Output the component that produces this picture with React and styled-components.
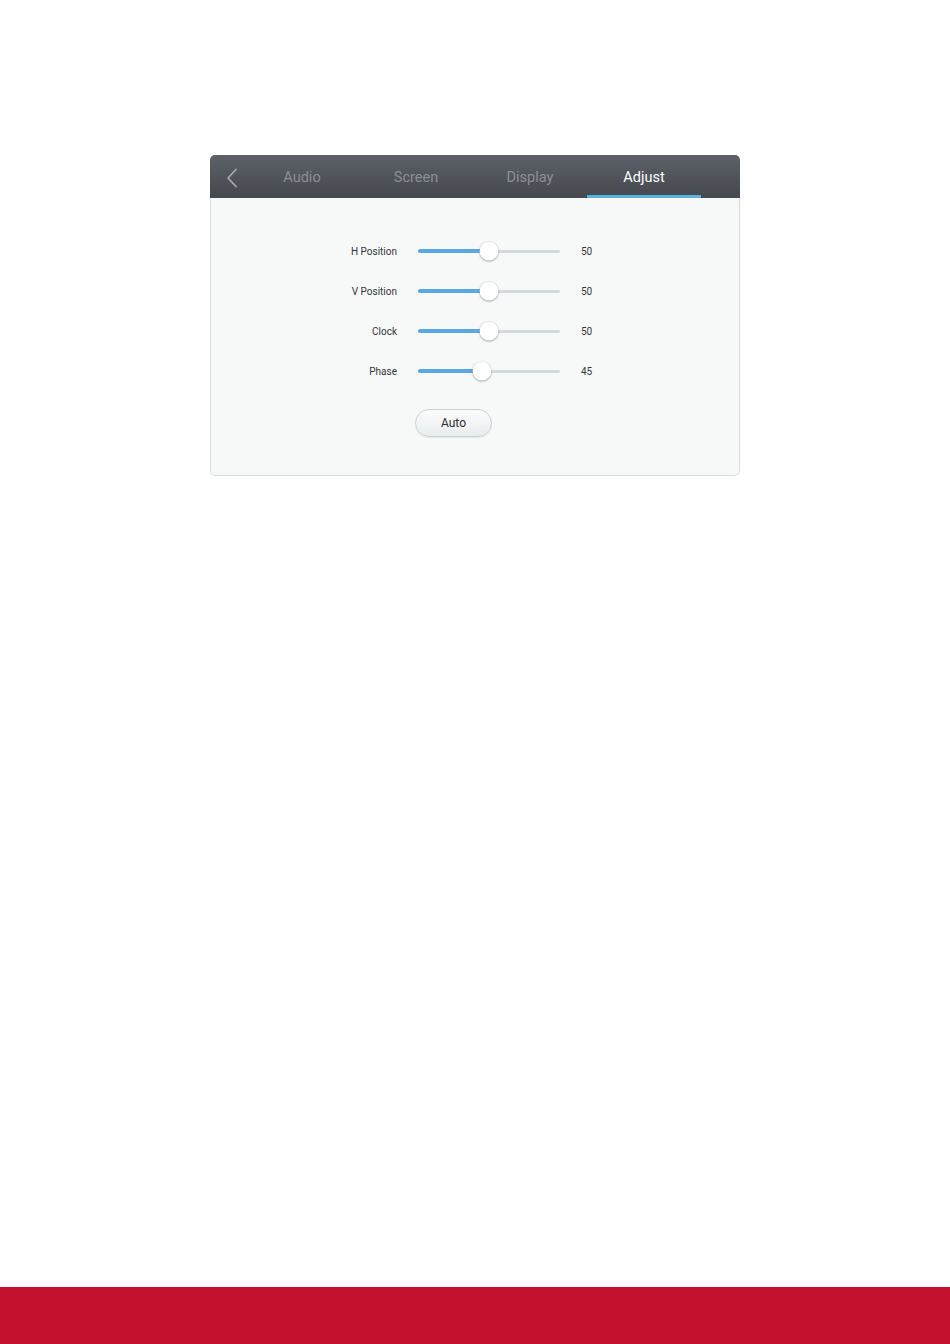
import React from "react";
import styled, { createGlobalStyle } from "styled-components";

const GlobalStyle = createGlobalStyle`
  html, body {
    margin: 0;
    padding: 0;
    background: #ffffff;
  }
  body {
    font-family: Roboto, "Liberation Sans", Arial, sans-serif;
  }
`;

const Page = styled.div`
  display: flex;
  flex-direction: column;
  min-height: 1344px;
  width: 950px;
`;

const Panel = styled.div`
  width: 530px;
  margin: 155px 0 0 210px;
  border-radius: 5px;
  overflow: hidden;
  box-sizing: border-box;
`;

const Header = styled.div`
  display: flex;
  align-items: stretch;
  height: 43px;
  background: linear-gradient(to bottom, #5c6068 0%, #45484e 100%);
`;

const BackButton = styled.div`
  width: 35px;
  box-sizing: border-box;
  padding: 2px 0 0 8px;
  display: flex;
  align-items: center;
  justify-content: center;
`;

const Tabs = styled.div`
  display: flex;
`;

const Tab = styled.div`
  width: 114px;
  display: flex;
  align-items: center;
  justify-content: center;
  box-sizing: border-box;
  padding-top: 5px;
  font-size: 14.5px;
  color: ${({ active }) => (active ? "#ffffff" : "#8c8f95")};
  border-bottom: 3px solid ${({ active }) => (active ? "#58b3e0" : "transparent")};
`;

const Body = styled.div`
  background: #f7f9f9;
  border: 1px solid #d9dcde;
  border-top: none;
  border-radius: 0 0 5px 5px;
  padding: 33px 0 38px 0;
  display: flex;
  flex-direction: column;
`;

const Row = styled.div`
  display: grid;
  grid-template-columns: 186px 142px 40px;
  column-gap: 21px;
  align-items: center;
  height: 40px;
`;

const Label = styled.div`
  text-align: right;
  font-size: 10px;
  color: #333538;
`;

const Value = styled.div`
  font-size: 10px;
  color: #333538;
`;

const Track = styled.div`
  position: relative;
  height: 3px;
  border-radius: 2px;
  background: #d6d9db;
`;

const Fill = styled.div`
  height: 4px;
  margin-top: -0.5px;
  border-radius: 2px;
  background: #5aa8e4;
`;

const Thumb = styled.div`
  position: absolute;
  top: 50%;
  width: 19px;
  height: 19px;
  border-radius: 50%;
  background: #ffffff;
  box-shadow: 0 1px 2px rgba(0, 0, 0, 0.3), 0 0 1px rgba(0, 0, 0, 0.2);
  transform: translate(-50%, -50%);
`;

const AutoButton = styled.button`
  align-self: flex-start;
  margin: 18px 0 0 204px;
  width: 77px;
  height: 28px;
  border-radius: 14px;
  border: 1px solid #cdd1d4;
  background: linear-gradient(to bottom, #fbfcfc 0%, #e9ecee 100%);
  box-shadow: 0 1px 1px rgba(0, 0, 0, 0.08);
  font-family: Roboto, "Liberation Sans", Arial, sans-serif;
  font-size: 12px;
  color: #2c2e31;
  padding: 0;
`;

const Footer = styled.div`
  margin-top: auto;
  height: 57px;
  background: #c4122f;
`;

const Slider = ({ value }) => (
  <Track>
    <Fill style={{ width: `${value}%` }} />
    <Thumb style={{ left: `${value}%` }} />
  </Track>
);

const rows = [
  { label: "H Position", value: 50 },
  { label: "V Position", value: 50 },
  { label: "Clock", value: 50 },
  { label: "Phase", value: 45 },
];

const tabs = ["Audio", "Screen", "Display", "Adjust"];

export default function App() {
  return (
    <Page>
      <GlobalStyle />
      <Panel>
        <Header>
          <BackButton>
            <svg width="12" height="20" viewBox="0 0 12 20">
              <polyline
                points="10,1.5 2,10 10,18.5"
                fill="none"
                stroke="#a6a9ae"
                strokeWidth="1.8"
                strokeLinecap="round"
                strokeLinejoin="round"
              />
            </svg>
          </BackButton>
          <Tabs>
            {tabs.map((t) => (
              <Tab key={t} active={t === "Adjust"}>
                {t}
              </Tab>
            ))}
          </Tabs>
        </Header>
        <Body>
          {rows.map((r) => (
            <Row key={r.label}>
              <Label>{r.label}</Label>
              <Slider value={r.value} />
              <Value>{r.value}</Value>
            </Row>
          ))}
          <AutoButton>Auto</AutoButton>
        </Body>
      </Panel>
      <Footer />
    </Page>
  );
}
